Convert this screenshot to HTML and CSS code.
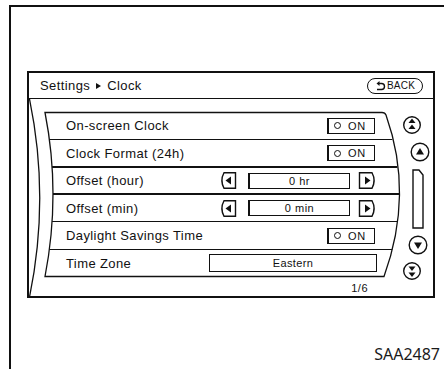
FILE: index.html
```html
<!DOCTYPE html>
<html>
<head>
<meta charset="utf-8">
<link rel="stylesheet" href="styles.css">
</head>
<body>
<div class="frame">
  <div class="screen">
    <div class="header">
      <span class="crumb">Settings <svg class="crumb-arrow" width="7" height="8" viewBox="0 0 7 8"><path d="M1 1 L6 4 L1 7 Z" fill="#111"/></svg> Clock</span>
      <span class="back"><svg class="back-icon" width="11" height="11" viewBox="0 0 11 11"><path d="M1.5 3.5 L4.5 1 L4.5 6 Z" fill="#111"/><path d="M4 3.5 H6.5 A3 3 0 0 1 6.5 9.5 H2" fill="none" stroke="#111" stroke-width="1.4"/></svg>BACK</span>
    </div>
    <div class="body">
      <svg class="deco" width="404" height="197" viewBox="0 0 404 197">
        <g fill="none" stroke="#111">
          <path d="M0.5 0 Q21 99 0.5 198" stroke-width="1.3"/>
          <path d="M16 13.5 L353 13.5 Q356 13.5 357 16 Q385 95 355 177.5 L16 177.5 Q32 95 16 13.5 Z" stroke-width="1.3"/>
          <line x1="20.4" y1="40.5" x2="363.3" y2="40.5" stroke-width="1"/>
          <line x1="23.1" y1="68" x2="368.3" y2="68" stroke-width="2"/>
          <line x1="24" y1="95" x2="370" y2="95" stroke-width="2"/>
          <line x1="23.1" y1="122.5" x2="368.4" y2="122.5" stroke-width="1"/>
          <line x1="20.4" y1="150.5" x2="363.3" y2="150.5" stroke-width="1"/>
        </g>
      </svg>
      <div class="main">
        <div class="row"><span class="label">On-screen Clock</span><span class="toggle"><i class="dot"></i>ON</span></div>
        <div class="row"><span class="label">Clock Format (24h)</span><span class="toggle"><i class="dot"></i>ON</span></div>
        <div class="row"><span class="label">Offset (hour)</span>
          <span class="stepper">
            <svg class="step-btn" width="18" height="17" viewBox="0 0 18 17"><path d="M5 0.75 H16.5 V16.25 H5 Q0.8 8.5 5 0.75 Z" fill="#fff" stroke="#111" stroke-width="1.4"/><path d="M6.5 8.5 L12 4.5 V12.5 Z" fill="#111"/></svg>
            <span class="value">0 hr</span>
            <svg class="step-btn right" width="19" height="17" viewBox="0 0 19 17"><path d="M1.5 0.75 H14 Q18.2 8.5 14 16.25 H1.5 Z" fill="#fff" stroke="#111" stroke-width="1.4"/><path d="M12.5 8.5 L7 4.5 V12.5 Z" fill="#111"/></svg>
          </span>
        </div>
        <div class="row"><span class="label">Offset (min)</span>
          <span class="stepper">
            <svg class="step-btn" width="18" height="17" viewBox="0 0 18 17"><path d="M5 0.75 H16.5 V16.25 H5 Q0.8 8.5 5 0.75 Z" fill="#fff" stroke="#111" stroke-width="1.4"/><path d="M6.5 8.5 L12 4.5 V12.5 Z" fill="#111"/></svg>
            <span class="value">0 min</span>
            <svg class="step-btn right" width="19" height="17" viewBox="0 0 19 17"><path d="M1.5 0.75 H14 Q18.2 8.5 14 16.25 H1.5 Z" fill="#fff" stroke="#111" stroke-width="1.4"/><path d="M12.5 8.5 L7 4.5 V12.5 Z" fill="#111"/></svg>
          </span>
        </div>
        <div class="row"><span class="label">Daylight Savings Time</span><span class="toggle"><i class="dot"></i>ON</span></div>
        <div class="row"><span class="label">Time Zone</span><span class="zone">Eastern</span></div>
        <div class="pager">1/6</div>
      </div>
      <svg class="scroll" width="34" height="197" viewBox="0 0 34 197">
        <g fill="none" stroke="#111" stroke-width="1.4">
          <circle cx="13" cy="26" r="8.3"/>
          <circle cx="21" cy="53" r="8.8"/>
          <path d="M14 71 H20 L24 76 V129 H14 Z"/>
          <circle cx="19" cy="146" r="8.8"/>
          <circle cx="13" cy="172" r="8.3"/>
        </g>
        <g fill="#111">
          <path d="M13 19.5 L16.5 24 H9.5 Z"/>
          <path d="M13 25.5 L16.5 30 H9.5 Z"/>
          <path d="M21 49 L25 55.5 H17 Z"/>
          <path d="M19 150 L23 143.5 H15 Z"/>
          <path d="M13 172 L16.5 167.5 H9.5 Z"/>
          <path d="M13 178 L16.5 173.5 H9.5 Z"/>
        </g>
      </svg>
    </div>
  </div>
  <div class="code">SAA2487</div>
</div>
</body>
</html>
```
FILE: styles.css
```css
html, body {
  margin: 0;
  background: #fff;
}
body {
  width: 444px;
  height: 369px;
  overflow: hidden;
  font-family: "Liberation Sans", Arial, sans-serif;
  color: #111;
}
.frame {
  box-sizing: border-box;
  width: 435px;
  height: 364px;
  margin: 5px 0 0 9px;
  padding: 64px 0 0 16px;
  border-top: 2px solid #111;
  border-left: 2px solid #111;
}
.screen {
  box-sizing: border-box;
  width: 408px;
  height: 227px;
  border: 2px solid #111;
  display: flex;
  flex-direction: column;
}
.header {
  flex: none;
  height: 25px;
  border-bottom: 1px solid #111;
  display: flex;
  align-items: center;
  justify-content: space-between;
  padding: 0 10px 0 11px;
}
.crumb {
  font-size: 13px;
  letter-spacing: 0.4px;
  display: flex;
  align-items: center;
  gap: 5px;
}
.crumb-arrow {
  display: block;
}
.back {
  box-sizing: border-box;
  width: 56px;
  height: 16px;
  border: 1.5px solid #111;
  border-radius: 8px;
  display: flex;
  align-items: center;
  justify-content: center;
  gap: 1px;
  font-size: 10px;
  letter-spacing: 0.2px;
}
.back-icon {
  display: block;
}
.body {
  position: relative;
  flex: 1;
  display: flex;
  justify-content: space-between;
}
.deco {
  position: absolute;
  left: 0;
  top: 0;
}
.main {
  position: relative;
  width: 348px;
  padding-top: 13px;
}
.row {
  height: 27.5px;
  display: flex;
  align-items: center;
  justify-content: space-between;
  padding-left: 37px;
  font-size: 13px;
  letter-spacing: 0.4px;
}
.toggle {
  box-sizing: border-box;
  width: 48px;
  height: 16px;
  margin-right: 2px;
  border: 1px solid #111;
  border-left-width: 2px;
  display: flex;
  align-items: center;
  gap: 7px;
  padding-left: 5px;
  font-size: 11px;
  letter-spacing: 0.6px;
}
.dot {
  width: 5px;
  height: 5px;
  border: 1px solid #111;
  border-radius: 50%;
}
.stepper {
  display: flex;
  align-items: center;
}
.step-btn {
  display: block;
}
.value {
  box-sizing: border-box;
  width: 102px;
  height: 16px;
  margin: 0 8px 0 11px;
  border: 1px solid #111;
  border-left-width: 2px;
  display: flex;
  align-items: center;
  justify-content: center;
  font-size: 11px;
  letter-spacing: 0.5px;
}
.zone {
  box-sizing: border-box;
  width: 168px;
  height: 18px;
  border: 1px solid #111;
  display: flex;
  align-items: center;
  justify-content: center;
  font-size: 11px;
  letter-spacing: 0.4px;
}
.pager {
  margin-top: 5px;
  padding-right: 9px;
  text-align: right;
  font-size: 11px;
  letter-spacing: 0.5px;
}
.scroll {
  display: block;
  flex: none;
}
.code {
  margin-top: 48px;
  padding-right: 4px;
  text-align: right;
  font-family: "Noto Sans", "Open Sans", sans-serif;
  font-size: 16px;
  line-height: 16px;
  color: #1a1a1a;
}
```
